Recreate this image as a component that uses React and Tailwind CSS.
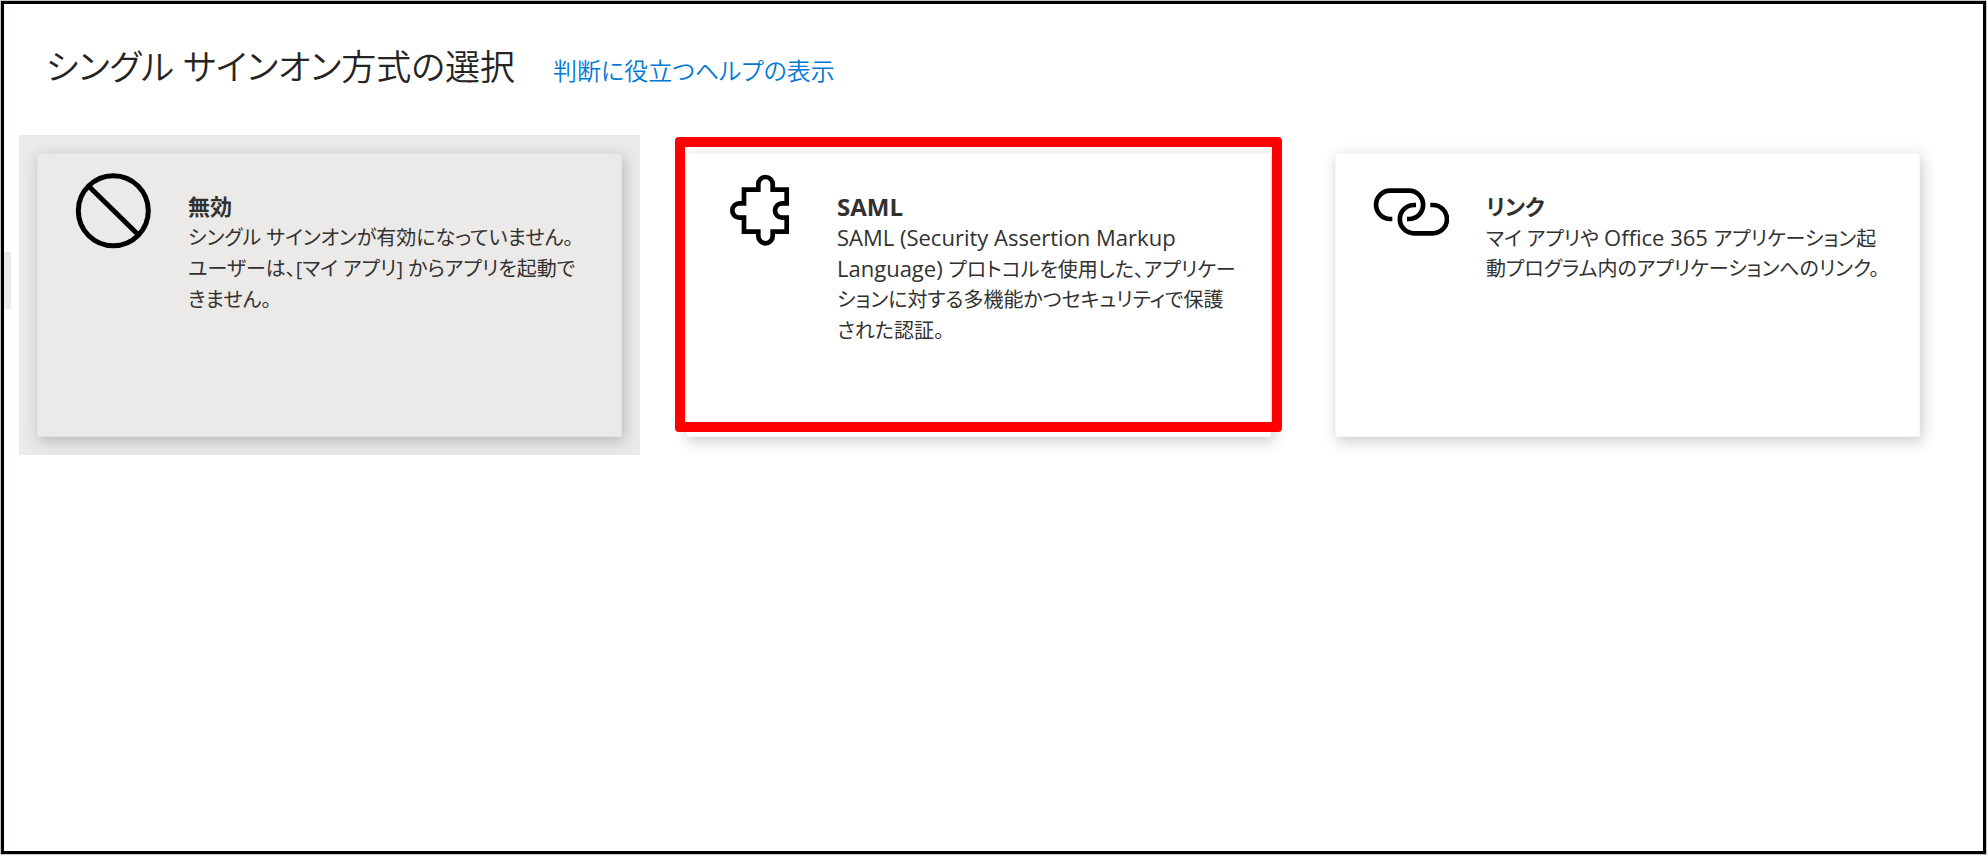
function DisabledIcon() {
  return (
    <svg viewBox="0 0 76 76" className="size-19 shrink-0" fill="none" stroke="#000" strokeWidth="5" aria-hidden="true">
      <circle cx="38.3" cy="37.7" r="35" />
      <path d="M13.5 13L63.5 62" />
    </svg>
  );
}

function PuzzleIcon() {
  return (
    <svg viewBox="0 0 76 76" className="size-19 shrink-0" fill="none" stroke="#000" strokeWidth="4.7" aria-hidden="true">
      <path d="M20 16.7H34.3V11.2A7.2 7.2 0 0 1 48.7 11.2V16.7H62.7V30.3H58.2A7.2 7.2 0 0 0 58.2 44.7H62.7V58.7H48.7V63.1A7.2 7.2 0 0 1 34.3 63.1V58.7H20V44.7H15.5A7.2 7.2 0 0 1 15.5 30.3H20Z" />
    </svg>
  );
}

function ChainIcon() {
  return (
    <svg viewBox="0 0 76 76" className="size-19 shrink-0" fill="none" stroke="#000" strokeWidth="4.7" aria-hidden="true">
      <path d="M19.3 46H17.2A14.15 14.15 0 0 1 17.2 17.7H36A14.15 14.15 0 0 1 36 46H34" />
      <path d="M43 32H41A14.15 14.15 0 0 0 41 60.3H59.8A14.15 14.15 0 0 0 59.8 32H57.3" />
    </svg>
  );
}

const methods = [
  {
    id: "disabled",
    title: "無効",
    icon: DisabledIcon,
    selected: true,
    lines: [
      "シングル サインオンが有効になっていません。",
      "ユーザーは、[マイ アプリ] からアプリを起動で",
      "きません。",
    ],
  },
  {
    id: "saml",
    title: "SAML",
    icon: PuzzleIcon,
    highlighted: true,
    lines: [
      "SAML (Security Assertion Markup",
      "Language) プロトコルを使用した、アプリケー",
      "ションに対する多機能かつセキュリティで保護",
      "された認証。",
    ],
  },
  {
    id: "link",
    title: "リンク",
    icon: ChainIcon,
    lines: [
      "マイ アプリや Office 365 アプリケーション起",
      "動プログラム内のアプリケーションへのリンク。",
    ],
  },
];

// Latin words run a size larger so they sit evenly beside the kana
function MixedText({ text, latinClass }) {
  return text.split(/([A-Za-z0-9()][A-Za-z0-9() ]*)/).map((part, i) =>
    i % 2 === 1 ? <span key={i} className={latinClass}>{part}</span> : part
  );
}

function MethodCard({ title, icon: Icon, lines, selected, highlighted }) {
  return (
    <li className={selected ? "relative overflow-hidden p-[18px] bg-[#ebeae9]" : "relative overflow-hidden p-[18px]"}>
      <button
        type="button"
        aria-pressed={Boolean(selected)}
        className="flex w-full min-h-[284px] items-start gap-[37px] pl-[38px] pt-5 text-left shadow-[2px_4px_14px_rgba(0,0,0,0.22),inset_0_0_0_1px_rgba(0,0,0,0.03)]"
      >
        <Icon />
        <span className="flex flex-col pt-[18px] text-[20px] leading-[31px] whitespace-nowrap text-[#323130]">
          <strong className="h-[31px] text-[22px] leading-[31px] font-bold">
            <MixedText text={title} latinClass="text-[24px] leading-[31px]" />
          </strong>
          {lines.map(line => (
            <span key={line} className="h-[31px]">
              <MixedText text={line} latinClass="text-[22px] leading-[31px]" />
            </span>
          ))}
        </span>
      </button>
      {highlighted && (
        <div className="pointer-events-none absolute inset-x-[7px] top-0.5 bottom-[23px] rounded-sm border-10 border-[#ff0000]" />
      )}
    </li>
  );
}

export default function App() {
  return (
    <div className="min-h-screen flex border border-[#c3cbc6] bg-white font-['Open_Sans','Noto_Sans_CJK_JP',sans-serif] [font-feature-settings:'palt']">
      <main className="relative flex-1 border-3 border-black">
        <div className="absolute left-0 top-[248px] h-[57px] w-[7px] bg-[#ebeae9]" />
        <header className="flex items-baseline gap-[38px] pl-[42px] pt-9">
          <h1 className="text-[35px] leading-[54px] font-[350] text-[#252423]">シングル サインオン方式の選択</h1>
          <a href="#help" className="text-2xl font-[350] text-[#0078d4]">判断に役立つヘルプの表示</a>
        </header>
        <ul className="mt-[41px] grid grid-cols-3 gap-7 pl-[15px] pr-[45px]">
          {methods.map(method => (
            <MethodCard key={method.id} {...method} />
          ))}
        </ul>
      </main>
    </div>
  );
}
